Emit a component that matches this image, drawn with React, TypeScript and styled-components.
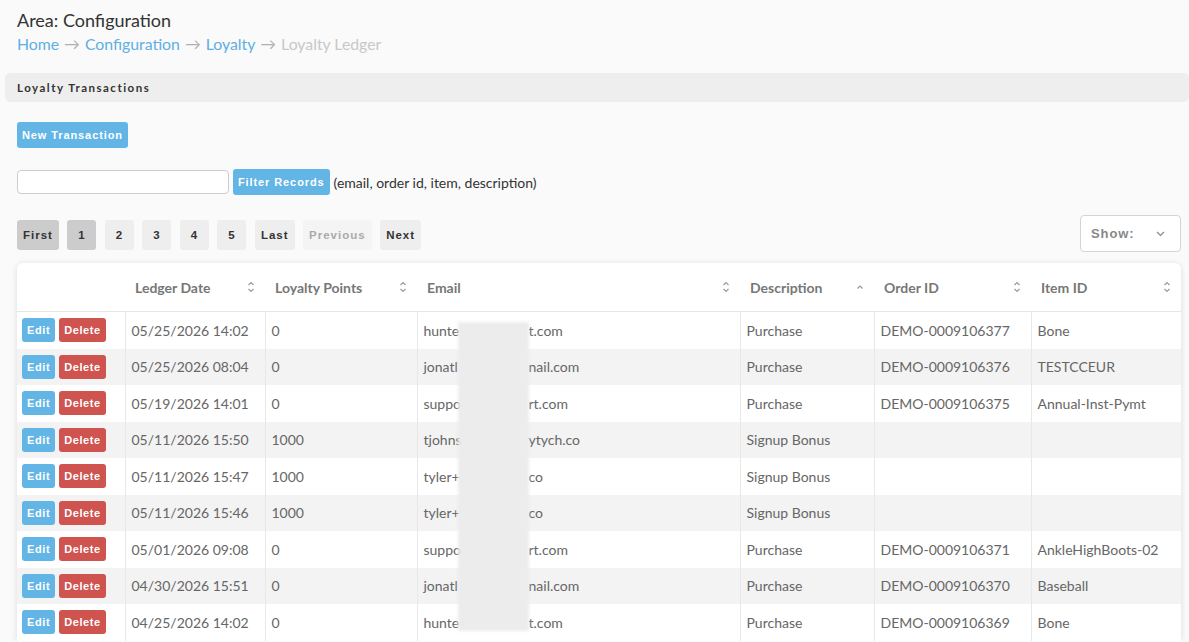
import React from "react";
import styled, { createGlobalStyle } from "styled-components";

const GlobalStyle = createGlobalStyle`
  html, body {
    margin: 0;
    padding: 0;
    background: #fafafa;
    font-family: Lato, "Open Sans", sans-serif;
    color: #333;
  }
`;

const Page = styled.div`
  padding: 8px 0 0;
`;

const Top = styled.div`
  padding: 0 17px;
`;

const Title = styled.h1`
  margin: 0;
  font-size: 18px;
  font-weight: 400;
  line-height: 24px;
  color: #333;
`;

const Crumbs = styled.div`
  display: flex;
  gap: 5px;
  margin-top: 1px;
  font-size: 15.8px;
  line-height: 22px;
`;

const Crumb = styled.a<{ $current?: boolean }>`
  color: ${(p) => (p.$current ? "#c8c8c8" : "#5dafe4")};
  text-decoration: none;
`;

const Arrow = styled.span`
  color: #b0b0b0;
`;

const PanelHead = styled.div`
  margin: 18px 0 0 5px;
  height: 29px;
  display: flex;
  align-items: center;
  padding: 0 12px;
  background: #eeeeee;
  border-radius: 5px;
  font-size: 11.5px;
  font-weight: 700;
  letter-spacing: 1.5px;
  color: #333;
`;

const Body = styled.div`
  padding: 20px 8px 0 17px;
`;

const Btn = styled.button<{ $tone?: "blue" | "red" }>`
  border: none;
  border-radius: 3px;
  background: ${(p) => (p.$tone === "red" ? "#cf5450" : "#62b5e5")};
  color: #fff;
  font-family: "Liberation Sans", Arial, sans-serif;
  font-weight: 700;
  font-size: 11px;
  letter-spacing: 0.9px;
  cursor: pointer;
  padding: 0 6px;
`;

const NewBtn = styled(Btn)`
  height: 26px;
  padding: 0 5px;
`;

const FilterRow = styled.div`
  display: flex;
  align-items: center;
  margin-top: 21px;
  gap: 4px;
`;

const FilterInput = styled.input`
  width: 212px;
  height: 24px;
  box-sizing: border-box;
  border: 1px solid #ccc;
  border-radius: 4px;
  background: #fff;
`;

const FilterBtn = styled(Btn)`
  height: 26px;
  padding: 0 5px;
`;

const Hint = styled.span`
  font-size: 14px;
  color: #333;
`;

const PagerRow = styled.div`
  display: flex;
  align-items: center;
  justify-content: space-between;
  margin-top: 20px;
`;

const Pager = styled.div`
  display: flex;
  gap: 8.5px;
  margin-top: 2px;
`;

const PageBtn = styled.button<{ $state?: "active" | "disabled" }>`
  height: 30px;
  min-width: 29px;
  padding: 0 6px;
  border: none;
  border-radius: 3px;
  font-family: "Liberation Sans", Arial, sans-serif;
  font-weight: 700;
  font-size: 11.5px;
  letter-spacing: 1px;
  background: ${(p) =>
    p.$state === "active" ? "#cccccc" : p.$state === "disabled" ? "#f4f4f4" : "#eeeeee"};
  color: ${(p) => (p.$state === "disabled" ? "#aaa" : "#333")};
`;

const ShowSelect = styled.div`
  width: 101px;
  height: 37px;
  box-sizing: border-box;
  border: 1px solid #d4d4d4;
  border-radius: 4px;
  background: #fff;
  display: flex;
  align-items: center;
  justify-content: space-between;
  padding: 0 15px 0 10px;
  font-family: "Liberation Sans", Arial, sans-serif;
  font-weight: 700;
  font-size: 13px;
  letter-spacing: 0.9px;
  color: #888;
`;

const Card = styled.div`
  position: relative;
  margin-top: 11px;
  width: 1164px;
  background: #fff;
  border-radius: 6px 6px 0 0;
  box-shadow: 0 1px 6px rgba(0, 0, 0, 0.12);
  overflow: hidden;
`;

const Table = styled.table`
  width: 100%;
  border-collapse: collapse;
  table-layout: fixed;
  font-size: 14px;
  color: #666;
`;

const Th = styled.th`
  height: 48px;
  padding: 0 10px;
  text-align: left;
  font-weight: 700;
  color: #777;
  border-bottom: 1px solid #e6e6e6;
`;

const ThInner = styled.div`
  display: flex;
  align-items: center;
  justify-content: space-between;
`;

const Tr = styled.tr`
  &:nth-child(even) {
    background: #f3f3f3;
  }
`;

const Td = styled.td`
  height: 36.5px;
  padding: 0 6px;
  border-left: 1px solid #e8e8e8;
  white-space: nowrap;
  &:first-child {
    border-left: none;
    padding: 0 5px;
  }
`;

const Actions = styled.div`
  display: flex;
  gap: 4px;
`;

const SmallBtn = styled(Btn)`
  height: 24px;
  padding: 0 5px;
  font-size: 11px;
  letter-spacing: 0.6px;
`;

const Blur = styled.div`
  position: absolute;
  left: 441px;
  top: 59px;
  width: 71px;
  height: 309px;
  background: #ececec;
  filter: blur(1.5px);
  opacity: 0.97;
`;

function SortIcon({ dir }: { dir?: "up" }) {
  return (
    <svg width="8" height="14" viewBox="0 0 8 14" fill="none" stroke="#999" strokeWidth="1.2">
      {dir === "up" ? (
        <path d="M1.5 8.5 L4 6 L6.5 8.5" />
      ) : (
        <>
          <path d="M1.5 5 L4 2.5 L6.5 5" />
          <path d="M1.5 9 L4 11.5 L6.5 9" />
        </>
      )}
    </svg>
  );
}

const columns: { label: string; width: number; sort?: "up" | "both" }[] = [
  { label: "", width: 108 },
  { label: "Ledger Date", width: 140, sort: "both" },
  { label: "Loyalty Points", width: 152, sort: "both" },
  { label: "Email", width: 323, sort: "both" },
  { label: "Description", width: 134, sort: "up" },
  { label: "Order ID", width: 157, sort: "both" },
  { label: "Item ID", width: 150, sort: "both" },
];

const rows = [
  ["05/25/2026 14:02", "0", "hunte", "t.com", "Purchase", "DEMO-0009106377", "Bone"],
  ["05/25/2026 08:04", "0", "jonatl", "nail.com", "Purchase", "DEMO-0009106376", "TESTCCEUR"],
  ["05/19/2026 14:01", "0", "suppo", "rt.com", "Purchase", "DEMO-0009106375", "Annual-Inst-Pymt"],
  ["05/11/2026 15:50", "1000", "tjohns", "ytych.co", "Signup Bonus", "", ""],
  ["05/11/2026 15:47", "1000", "tyler+", "co", "Signup Bonus", "", ""],
  ["05/11/2026 15:46", "1000", "tyler+", "co", "Signup Bonus", "", ""],
  ["05/01/2026 09:08", "0", "suppo", "rt.com", "Purchase", "DEMO-0009106371", "AnkleHighBoots-02"],
  ["04/30/2026 15:51", "0", "jonatl", "nail.com", "Purchase", "DEMO-0009106370", "Baseball"],
  ["04/25/2026 14:02", "0", "hunte", "t.com", "Purchase", "DEMO-0009106369", "Bone"],
];

const EmailCell = styled.div`
  display: flex;
`;

const EmailHead = styled.span`
  width: 105px;
`;

export default function App() {
  return (
    <Page>
      <GlobalStyle />
      <Top>
        <Title>Area: Configuration</Title>
        <Crumbs>
          <Crumb href="#">Home</Crumb>
          <Arrow>→</Arrow>
          <Crumb href="#">Configuration</Crumb>
          <Arrow>→</Arrow>
          <Crumb href="#">Loyalty</Crumb>
          <Arrow>→</Arrow>
          <Crumb $current>Loyalty Ledger</Crumb>
        </Crumbs>
      </Top>
      <PanelHead>Loyalty Transactions</PanelHead>
      <Body>
        <NewBtn>New Transaction</NewBtn>
        <FilterRow>
          <FilterInput />
          <FilterBtn>Filter Records</FilterBtn>
          <Hint>(email, order id, item, description)</Hint>
        </FilterRow>
        <PagerRow>
          <Pager>
            <PageBtn $state="active">First</PageBtn>
            <PageBtn $state="active">1</PageBtn>
            <PageBtn>2</PageBtn>
            <PageBtn>3</PageBtn>
            <PageBtn>4</PageBtn>
            <PageBtn>5</PageBtn>
            <PageBtn>Last</PageBtn>
            <PageBtn $state="disabled">Previous</PageBtn>
            <PageBtn>Next</PageBtn>
          </Pager>
          <ShowSelect>
            Show:
            <svg width="9" height="6" viewBox="0 0 9 6" fill="none" stroke="#888" strokeWidth="1.2">
              <path d="M1 1 L4.5 4.5 L8 1" />
            </svg>
          </ShowSelect>
        </PagerRow>
        <Card>
          <Table>
            <colgroup>
              {columns.map((c, i) => (
                <col key={i} style={{ width: c.width }} />
              ))}
            </colgroup>
            <thead>
              <tr>
                {columns.map((c, i) => (
                  <Th key={i}>
                    <ThInner>
                      <span>{c.label}</span>
                      {c.sort && <SortIcon dir={c.sort === "up" ? "up" : undefined} />}
                    </ThInner>
                  </Th>
                ))}
              </tr>
            </thead>
            <tbody>
              {rows.map((r, i) => (
                <Tr key={i}>
                  <Td>
                    <Actions>
                      <SmallBtn>Edit</SmallBtn>
                      <SmallBtn $tone="red">Delete</SmallBtn>
                    </Actions>
                  </Td>
                  <Td>{r[0]}</Td>
                  <Td>{r[1]}</Td>
                  <Td>
                    <EmailCell>
                      <EmailHead>{r[2]}</EmailHead>
                      <span>{r[3]}</span>
                    </EmailCell>
                  </Td>
                  <Td>{r[4]}</Td>
                  <Td>{r[5]}</Td>
                  <Td>{r[6]}</Td>
                </Tr>
              ))}
            </tbody>
          </Table>
          <Blur />
        </Card>
      </Body>
    </Page>
  );
}
